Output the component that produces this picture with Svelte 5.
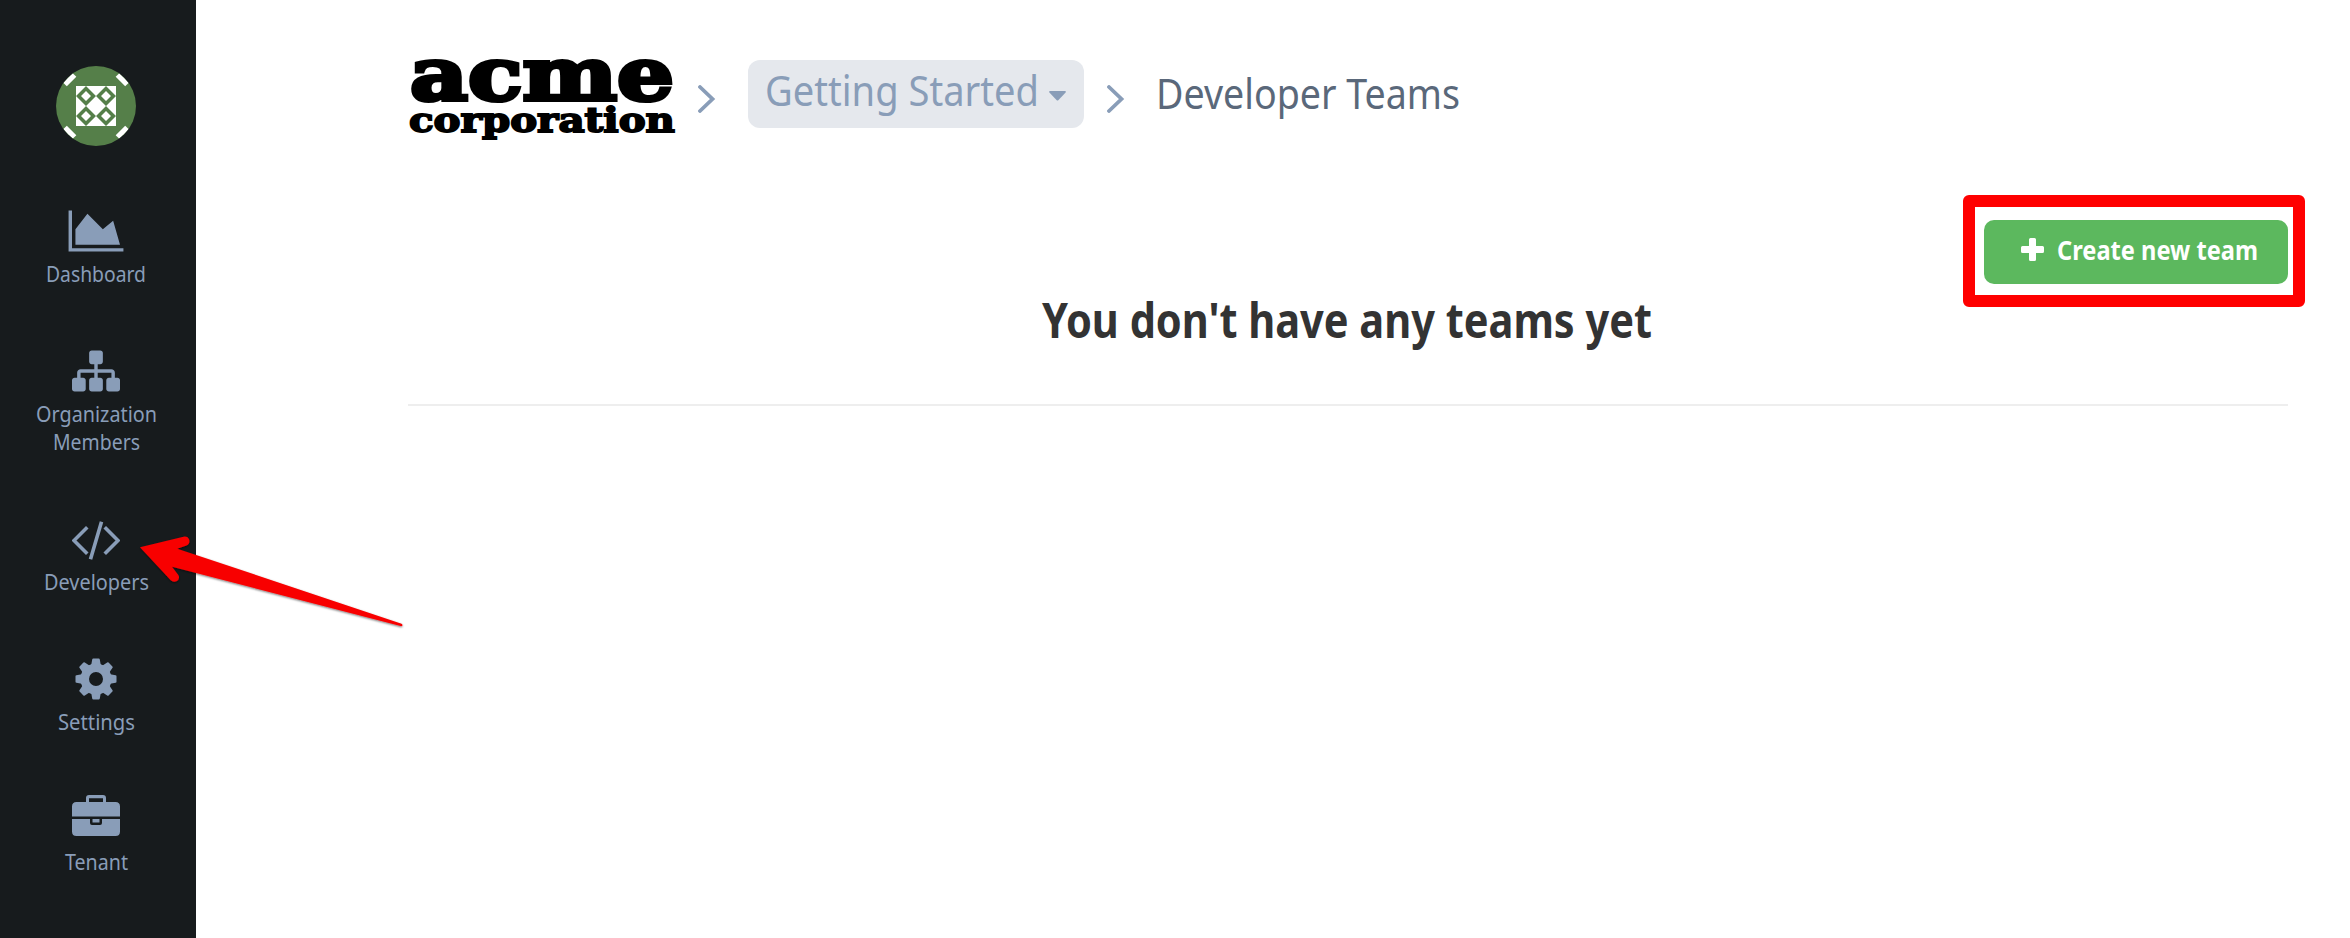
<script>
  const items = [
    { icon: 'chart', lines: [['Dashboard', 100]] },
    { icon: 'sitemap', lines: [['Organization', 121], ['Members', 87]] },
    { icon: 'code', lines: [['Developers', 105]] },
    { icon: 'cog', lines: [['Settings', 77]] },
    { icon: 'briefcase', lines: [['Tenant', 63]] }
  ];
  const marks = [0, 90, 180, 270];
  const teeth = [0, 45, 90, 135, 180, 225, 270, 315];
  const diamonds = [[30, 30], [50, 30], [30, 50], [50, 50]];
</script>

{#snippet fitted(text, width, height, baseline, kind)}
  <svg class="fitted {kind}" {width} {height}>
    <text x="0" y={baseline} textLength={width} lengthAdjust="spacingAndGlyphs">{text}</text>
  </svg>
{/snippet}

{#snippet chevron()}
  <svg class="chevron" width="18" height="28" viewBox="0 0 18 28">
    <path d="M2 2 L14.5 14 L2 26" />
  </svg>
{/snippet}

<div class="page">
  <aside class="sidebar">
    <svg class="avatar" width="80" height="80" viewBox="0 0 80 80">
      <clipPath id="disc"><circle cx="40" cy="40" r="40" /></clipPath>
      <g clip-path="url(#disc)">
        <rect width="80" height="80" fill="#557f49" />
        {#each marks as angle}
          <path d="M9 18.5 L18.5 9" stroke="#fff" stroke-width="5.2" transform="rotate({angle} 40 40)" />
        {/each}
        <rect x="20" y="20" width="40" height="40" fill="#fff" />
        {#each diamonds as [x, y]}
          <path
            fill="#557f49"
            fill-rule="evenodd"
            transform="translate({x} {y})"
            d="M0 -10 L10 0 L0 10 L-10 0Z M0 -5 L-5 0 L0 5 L5 0Z"
          />
        {/each}
      </g>
    </svg>

    <nav>
      {#each items as item}
        <div class="item">
          {#if item.icon === 'chart'}
            <svg class="icon" width="56" height="48" viewBox="0 -256 2048 1792">
              <path d="M2048 1280v128H0V-128h128v1408zM1664 256l256 896H256V576L704 0l576 576z" />
            </svg>
          {:else if item.icon === 'sitemap'}
            <svg class="icon" width="48" height="48" viewBox="0 0 1792 1792">
              <path d="M1792 1248v320q0 40-28 68t-68 28h-320q-40 0-68-28t-28-68v-320q0-40 28-68t68-28h96v-192h-512v192h96q40 0 68 28t28 68v320q0 40-28 68t-68 28h-320q-40 0-68-28t-28-68v-320q0-40 28-68t68-28h96v-192h-512v192h96q40 0 68 28t28 68v320q0 40-28 68t-68 28h-320q-40 0-68-28t-28-68v-320q0-40 28-68t68-28h96v-192q0-52 38-90t90-38h512v-192h-96q-40 0-68-28t-28-68v-320q0-40 28-68t68-28h320q40 0 68 28t28 68v320q0 40-28 68t-68 28h-96v192h512q52 0 90 38t38 90v192h96q40 0 68 28t28 68z" />
            </svg>
          {:else if item.icon === 'code'}
            <svg class="icon line" width="48" height="48" viewBox="0 0 48 48">
              <path d="M14 13.5 L2 25.5 L14 37.5 M34 13.5 L46 25.5 L34 37.5 M29 8.500 L19 42.500" />
            </svg>
          {:else if item.icon === 'cog'}
            <svg class="icon" width="48" height="48" viewBox="0 0 48 48">
              <path fill-rule="evenodd" d="M24 8.500a15.500 15.500 0 1 0 0 31a15.500 15.500 0 1 0 0-31zM24 17a7 7 0 1 1 0 14a7 7 0 1 1 0-14z" />
              {#each teeth as angle}
                <path d="M17.500 10.800 Q19.300 10.200 19.500 8.500 L20.200 4.400 Q20.400 3.500 21.300 3.500 H26.700 Q27.600 3.500 27.800 4.400 L28.500 8.500 Q28.700 10.200 30.500 10.800 V12.500 H17.500Z" transform="rotate({angle} 24 24)" />
              {/each}
            </svg>
          {:else}
            <svg class="icon" width="48" height="48" viewBox="0 0 48 48">
              <path fill-rule="evenodd" d="M14 7V3Q14 0 17 0H31Q34 0 34 3V7H43.500Q48 7 48 11.500V21.500H0V11.500Q0 7 4.500 7ZM17 3.200V7H31V3.200Z" />
              <path d="M0 24H18V28Q18 30 20 30H28Q30 30 30 28V24H48V36.500Q48 41 43.500 41H4.500Q0 41 0 36.500Z" />
              <rect x="20.500" y="24" width="7" height="3.500" />
            </svg>
          {/if}
          <div class="label">
            {#each item.lines as [text, width]}
              {@render fitted(text, width, 28, 21, 'small')}
            {/each}
          </div>
        </div>
      {/each}
    </nav>
  </aside>

  <main>
    <header>
      <svg class="logo" width="268" height="84">
        <text>
          <tspan class="acme" x="2" y="39.500" textLength="264" lengthAdjust="spacingAndGlyphs">acme</tspan>
          <tspan class="corp" x="1" y="71.500" textLength="266" lengthAdjust="spacingAndGlyphs">corporation</tspan>
        </text>
      </svg>
      <div class="sep first">{@render chevron()}</div>
      <div class="pill">
        {@render fitted('Getting Started', 274, 68, 46, 'crumb')}
        <svg class="caret" width="17" height="10" viewBox="0 0 17 10">
          <path d="M1 0H16Q17.500 0.500 16.400 1.800L9.500 9Q8.500 10 7.500 9L0.600 1.800Q-0.500 0.500 1 0Z" />
        </svg>
      </div>
      <div class="sep second">{@render chevron()}</div>
      <div class="current">{@render fitted('Developer Teams', 304, 68, 48.5, 'crumb')}</div>
    </header>

    <div class="actions">
      <div class="highlight">
        <button>
          <svg width="23" height="23" viewBox="0 0 23 23">
            <path d="M9.500 0H13.500Q15 0 15 1.500V8H21.500Q23 8 23 9.500V13.500Q23 15 21.500 15H15V21.500Q15 23 13.500 23H9.500Q8 23 8 21.500V15H1.500Q0 15 0 13.500V9.500Q0 8 1.500 8H8V1.500Q8 0 9.500 0Z" fill="#fff" />
          </svg>
          {@render fitted('Create new team', 201, 40, 28, 'action')}
        </button>
      </div>
    </div>

    <h1>{@render fitted("You don't have any teams yet", 610, 64, 42, 'title')}</h1>
    <hr />
  </main>

  <svg class="arrow" width="270" height="100" viewBox="0 0 270 100">
    <defs>
      <filter id="shade" x="-5%" y="-10%" width="110%" height="125%">
        <feDropShadow dx="0" dy="1" stdDeviation="0.8" flood-color="#000" flood-opacity="0.55" />
      </filter>
    </defs>
    <path
      filter="url(#shade)"
      d="M0 7.300 L43.500 -3.300 Q48 -4 49.300 0 Q50 4 46.500 5.500 L37.300 8.700 L261.500 83.700 Q263.500 85.200 261.500 86.300 L32 26.700 L38.300 35 Q40.500 39 36.500 41.300 Q33 42.700 30.500 40 Z"
    />
  </svg>
</div>

<style>
  :global(body) {
    margin: 0;
    background: #fff;
  }
  .page {
    position: relative;
    display: flex;
    width: 2350px;
    height: 938px;
    overflow: hidden;
    font-family: 'Noto Sans', 'Open Sans', sans-serif;
  }
  .sidebar {
    display: flex;
    flex-direction: column;
    align-items: center;
    box-sizing: border-box;
    width: 196px;
    height: 938px;
    padding: 66px 4px 0 0;
    background: #171b1d;
  }
  .avatar {
    display: block;
    margin-bottom: 61px;
  }
  nav {
    display: flex;
    flex-direction: column;
    gap: 58px;
  }
  .item,
  .label {
    display: flex;
    flex-direction: column;
    align-items: center;
  }
  .item {
    gap: 6px;
  }
  .icon {
    display: block;
    fill: #899db8;
  }
  .line {
    fill: none;
    stroke: #899db8;
    stroke-width: 3.6;
    stroke-linecap: square;
  }
  .fitted {
    display: block;
    overflow: visible;
    flex: none;
  }
  .small {
    font-size: 21.5px;
    fill: #899db8;
  }
  main {
    flex: 1;
    padding: 60px 45px 0 212px;
  }
  header {
    display: flex;
    height: 135px;
    align-items: flex-start;
  }
  .logo {
    display: block;
    flex: none;
    overflow: visible;
    font-family: 'DejaVu Serif', serif;
    font-weight: 700;
    fill: #000;
    stroke: #000;
  }
  .acme {
    font-size: 72px;
    stroke-width: 4;
  }
  .corp {
    font-size: 34px;
    stroke-width: 1.8;
  }
  .chevron {
    display: block;
    fill: none;
    stroke: #899db8;
    stroke-width: 3.8;
    stroke-linecap: round;
  }
  .sep {
    padding-top: 25px;
  }
  .first {
    padding-left: 22px;
    width: 50px;
  }
  .second {
    padding-left: 23px;
    width: 49px;
  }
  .pill {
    display: flex;
    align-items: center;
    box-sizing: border-box;
    width: 336px;
    height: 68px;
    padding-left: 17px;
    gap: 10px;
    border-radius: 12px;
    background: #e5e8ed;
  }
  .caret {
    margin-top: 3px;
    fill: #899db8;
  }
  .crumb {
    font-size: 41px;
    fill: #899db8;
  }
  .current .crumb {
    fill: #5a687a;
  }
  .actions {
    display: flex;
    justify-content: flex-end;
    height: 90px;
  }
  .highlight {
    box-sizing: border-box;
    width: 342px;
    height: 112px;
    padding: 13px 5px 11px 9px;
    border: 12px solid #f00;
    border-radius: 6px;
  }
  button {
    display: flex;
    align-items: center;
    box-sizing: border-box;
    width: 304px;
    height: 64px;
    padding: 0 0 0 37px;
    gap: 13px;
    border: 0;
    border-radius: 10px;
    background: #5cb85e;
    font-family: inherit;
  }
  button > svg:first-child {
    margin-bottom: 6px;
  }
  .action {
    font-size: 26.5px;
    font-weight: 700;
    fill: #fff;
  }
  h1 {
    display: flex;
    justify-content: center;
    width: 1878px;
    margin: 11px 0 0;
    font-size: 48px;
  }
  .title {
    font-size: 48px;
    font-weight: 700;
    fill: #333;
  }
  hr {
    width: 1880px;
    height: 2px;
    margin: 44px 0 0;
    border: 0;
    background: #eee;
  }
  .arrow {
    position: absolute;
    left: 140px;
    top: 540px;
    overflow: visible;
    fill: #f80000;
  }
</style>
